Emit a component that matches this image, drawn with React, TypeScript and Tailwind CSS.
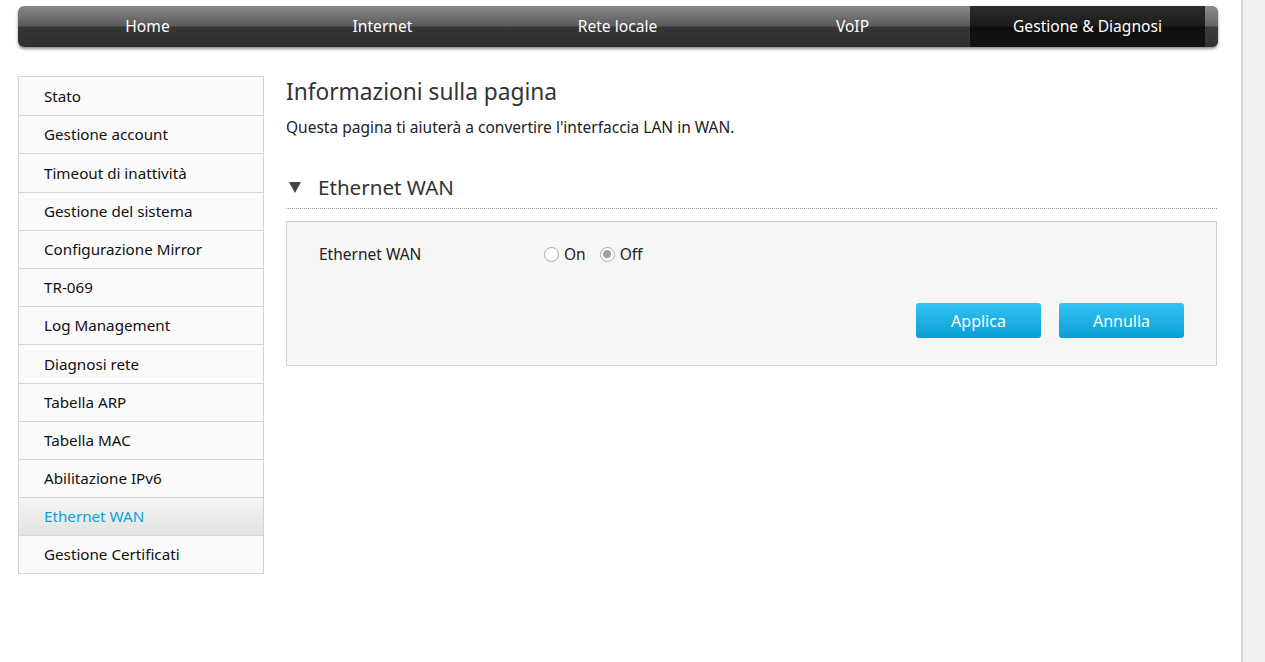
const navItems = ['Home', 'Internet', 'Rete locale', 'VoIP', 'Gestione & Diagnosi'];

const menu = [
  'Stato',
  'Gestione account',
  'Timeout di inattività',
  'Gestione del sistema',
  'Configurazione Mirror',
  'TR-069',
  'Log Management',
  'Diagnosi rete',
  'Tabella ARP',
  'Tabella MAC',
  'Abilitazione IPv6',
  'Ethernet WAN',
  'Gestione Certificati',
];

function Radio({ checked, label }: { checked?: boolean; label: string }) {
  return (
    <label className="flex items-center gap-[5px]">
      <span className="w-[15px] h-[15px] rounded-full border border-[#a9a9a9] bg-white flex items-center justify-center">
        {checked && <span className="w-[8px] h-[8px] rounded-full bg-[#a0a0a0]" />}
      </span>
      <span>{label}</span>
    </label>
  );
}

export default function App() {
  return (
    <div
      className="flex w-[1265px] h-[662px] bg-white text-[15px] text-[#333]"
      style={{ fontFamily: '"Noto Sans", "Open Sans", sans-serif' }}
    >
      <div className="w-[1241px] flex flex-col">
        {/* Top navigation */}
        <div className="mt-[6px] ml-[18px] w-[1200px] h-[41px] rounded-[6px] flex overflow-hidden shadow-[0_2px_3px_rgba(0,0,0,0.45)] bg-[linear-gradient(#8a8a8a,#5a5a5a_48%,#363636_52%,#2e2e2e)]">
          <div className="w-[12px]" />
          {navItems.map((item, i) => (
            <div
              key={item}
              className={
                'w-[235px] flex items-center justify-center text-white text-[15.6px] ' +
                (i === navItems.length - 1
                  ? 'bg-[linear-gradient(#2c2c2c,#1c1c1c_48%,#0e0e0e_52%,#141414)]'
                  : '')
              }
            >
              {item}
            </div>
          ))}
          <div className="flex-1 bg-[linear-gradient(#8a8a8a,#666_48%,#3a3a3a_52%,#333)]" />
        </div>

        <div className="flex mt-[29px]">
          {/* Sidebar */}
          <div className="ml-[18px] w-[246px] border border-[#d4d4d4] bg-[#fafafa] self-start">
            {menu.map((item, i) => {
              const active = item === 'Ethernet WAN';
              return (
                <div
                  key={item}
                  className={
                    'h-[38.2px] flex items-center pl-[25px] text-[15.2px] ' +
                    (i > 0 ? 'border-t border-[#d4d4d4] ' : '') +
                    (active
                      ? 'text-[#0f9fd6] bg-[linear-gradient(#f5f5f5,#e2e2e2)]'
                      : 'text-[#111]')
                  }
                >
                  {item}
                </div>
              );
            })}
          </div>

          {/* Content */}
          <div className="ml-[22px] w-[931px]">
            <h1 className="text-[22.7px] leading-[30px] text-[#333] mt-[1px]">Informazioni sulla pagina</h1>
            <p className="mt-[9px] text-[15.5px] text-[#222]">
              Questa pagina ti aiuterà a convertire l'interfaccia LAN in WAN.
            </p>

            <div className="mt-[33px] flex items-center h-[30px]">
              <span className="ml-[3px] w-0 h-0 border-l-[6px] border-r-[6px] border-t-[11px] border-l-transparent border-r-transparent border-t-[#444]" />
              <span className="ml-[17px] text-[20.6px] text-[#333]">Ethernet WAN</span>
            </div>
            <div className="mt-[6px] border-t border-dotted border-[#999]" />

            <div className="mt-[12px] border border-[#d0d0d0] bg-[#f6f6f6] h-[145px] px-[32px]">
              <div className="flex items-center mt-[20px] h-[24px] text-[15.5px]">
                <span className="w-[225px] text-[#222]">Ethernet WAN</span>
                <div className="flex items-center gap-[14px] text-[#222]">
                  <Radio label="On" />
                  <Radio checked label="Off" />
                </div>
              </div>
              <div className="flex justify-end gap-[18px] mt-[37px]">
                <button className="w-[125px] h-[35px] rounded-[3px] text-white text-[16px] bg-[linear-gradient(#34c2f4,#0a9fd3)]">
                  Applica
                </button>
                <button className="w-[125px] h-[35px] rounded-[3px] text-white text-[16px] bg-[linear-gradient(#34c2f4,#0a9fd3)]">
                  Annulla
                </button>
              </div>
            </div>
          </div>
        </div>
      </div>

      {/* Scrollbar strip */}
      <div className="w-[24px] h-full bg-[#f0f0f0] border-l-2 border-[#d6d6d6]" />
    </div>
  );
}
